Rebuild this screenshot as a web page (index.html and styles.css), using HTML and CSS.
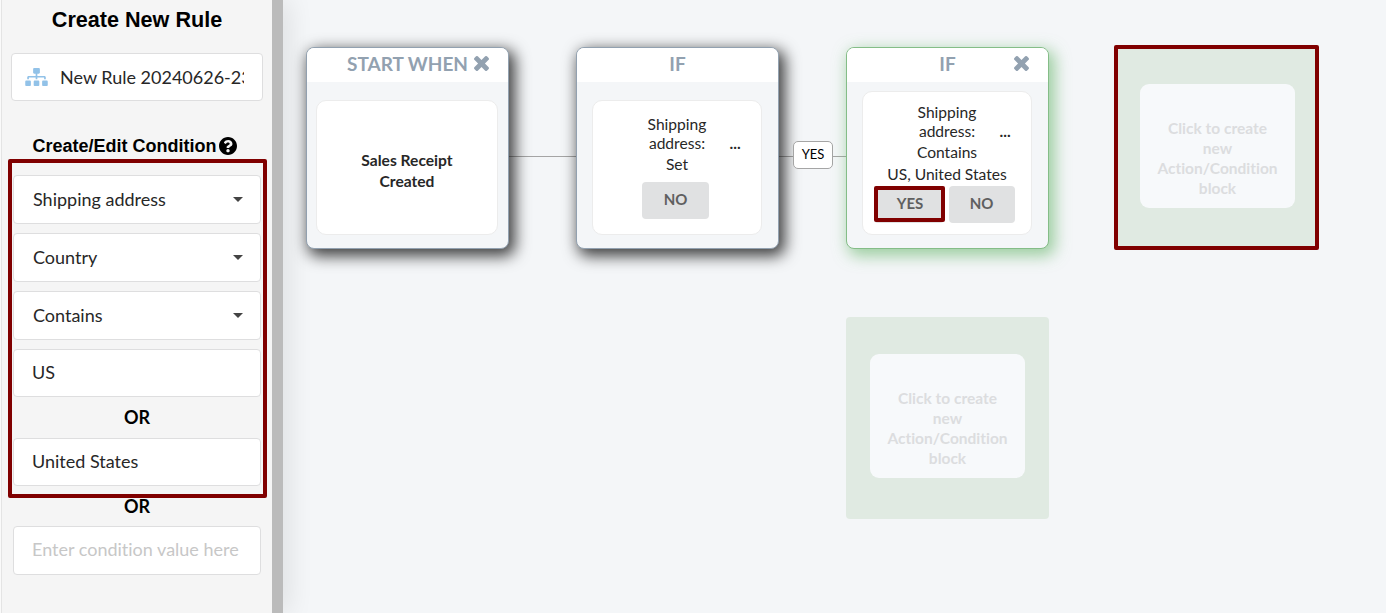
FILE: index.html
```html
<!DOCTYPE html>
<html lang="en">
<head>
  <meta charset="UTF-8" />
  <meta name="viewport" content="width=device-width, initial-scale=1.0"/>
  <title>Create New Rule</title>
  <link rel="stylesheet" href="styles.css">
</head>
<body>
  <svg class="hidden">
    <symbol id="icon-close" viewBox="302 302 1188 1188">
      <path d="M1490 1322q0 40-28 68l-136 136q-28 28-68 28t-68-28l-294-294-294 294q-28 28-68 28t-68-28l-136-136q-28-28-28-68t28-68l294-294-294-294q-28-28-28-68t28-68l136-136q28-28 68-28t68 28l294 294 294-294q28-28 68-28t68 28l136 136q28 28 28 68t-28 68l-294 294 294 294q28 28 28 68z" transform="translate(0 -64)"/>
    </symbol>
  </svg>

  <div class="app">
    <aside class="sidebar">
      <h1>Create New Rule</h1>
      <div class="name-box">
        <svg class="sitemap-icon" viewBox="0 0 640 512"><path d="M128 352H32c-17.67 0-32 14.33-32 32v96c0 17.67 14.33 32 32 32h96c17.67 0 32-14.33 32-32v-96c0-17.67-14.33-32-32-32zm-24-80h192v48h48v-48h192v48h48v-57.59c0-21.17-17.23-38.41-38.41-38.41H344v-64h40c17.67 0 32-14.33 32-32V32c0-17.67-14.33-32-32-32H256c-17.67 0-32 14.33-32 32v96c0 17.67 14.33 32 32 32h40v64H94.41C73.23 224 56 241.23 56 262.41V320h48v-48zm264 80h-96c-17.67 0-32 14.33-32 32v96c0 17.67 14.33 32 32 32h96c17.67 0 32-14.33 32-32v-96c0-17.67-14.33-32-32-32zm240 0h-96c-17.67 0-32 14.33-32 32v96c0 17.67 14.33 32 32 32h96c17.67 0 32-14.33 32-32v-96c0-17.67-14.33-32-32-32z"/></svg>
        <span class="name-text">New Rule 20240626-235</span>
      </div>

      <h2>Create/Edit Condition<svg class="help-icon" viewBox="8 8 496 496"><path d="M504 256c0 136.997-111.043 248-248 248S8 392.997 8 256C8 119.083 119.043 8 256 8s248 111.083 248 248zM262.655 90c-54.497 0-89.255 22.957-116.549 63.758-3.536 5.286-2.353 12.415 2.715 16.258l34.699 26.31c5.205 3.947 12.621 3.008 16.665-2.122 17.864-22.658 30.113-35.797 57.303-35.797 20.429 0 45.698 13.148 45.698 32.958 0 14.976-12.363 22.667-32.534 33.976C247.128 238.528 216 254.941 216 296v4c0 6.627 5.373 12 12 12h56c6.627 0 12-5.373 12-12v-1.333c0-28.462 83.186-29.647 83.186-106.667 0-58.002-60.165-102-116.531-102zM256 338c-25.365 0-46 20.635-46 46 0 25.364 20.635 46 46 46s46-20.636 46-46c0-25.364-20.635-46-46-46z"/></svg></h2>

      <div class="conditions">
        <div class="dropdown">Shipping address<i class="caret"></i></div>
        <div class="dropdown">Country<i class="caret"></i></div>
        <div class="dropdown">Contains<i class="caret"></i></div>
        <div class="field">US</div>
        <div class="or">OR</div>
        <div class="field">United States</div>
        <div class="or or-last">OR</div>
        <div class="field placeholder">Enter condition value here</div>
        <div class="highlight highlight-conditions"></div>
      </div>
    </aside>
    <div class="splitter"></div>

    <main class="canvas">
      <div class="edge edge-start"></div>
      <div class="edge edge-yes"></div>

      <div class="node node-start">
        <div class="node-header">START WHEN<svg class="close"><use href="#icon-close"/></svg></div>
        <div class="node-body wide">
          <strong>Sales Receipt<br>Created</strong>
        </div>
      </div>

      <div class="node node-if">
        <div class="node-header">IF</div>
        <div class="node-body">
          <div class="prop">Shipping<br>address:<span class="more">...</span></div>
          <div class="operator">Set</div>
          <div class="buttons"><span class="btn">NO</span></div>
        </div>
      </div>

      <span class="edge-label">YES</span>

      <div class="node node-active">
        <div class="node-header">IF<svg class="close"><use href="#icon-close"/></svg></div>
        <div class="node-body tall">
          <div class="prop">Shipping<br>address:<span class="more">...</span></div>
          <div class="operator">Contains</div>
          <div class="values">US, United States</div>
          <div class="buttons">
            <span class="btn">YES<i class="highlight highlight-btn"></i></span>
            <span class="btn">NO</span>
          </div>
        </div>
      </div>

      <div class="slot slot-yes">
        <div class="slot-text">Click to create new Action/Condition block</div>
        <div class="highlight highlight-slot"></div>
      </div>
      <div class="slot slot-no">
        <div class="slot-text">Click to create new Action/Condition block</div>
      </div>
    </main>
  </div>
</body>
</html>
```
FILE: styles.css
```css
:root {
  --bg: #f4f6f8;
  --border: #dededf;
  --text: #272727;
  --slate: #92a1b0;
  --red: #800000;
}

* {
  box-sizing: border-box;
}

body {
  font-family: Lato, sans-serif;
  font-variant-ligatures: none;
  color: var(--text);
  margin: 0;
}

.hidden {
  display: none;
}

.app {
  display: flex;
  height: 613px;
  overflow: hidden;
}

/* Sidebar */
.sidebar {
  position: relative;
  z-index: 2;
  width: 272px;
  flex: none;
  padding: 0 9px 0 10px;
  background: #f5f5f5;
  border-left: 1px solid #fafafa;
  box-shadow: inset 1px 0 #e4e4e4;
}

h1 {
  margin: 0;
  padding-top: 6px;
  height: 53px;
  font: bold 21.6px/27px "Liberation Sans", Arial, sans-serif;
  color: #000;
  text-align: center;
}

.name-box {
  display: flex;
  align-items: center;
  height: 48px;
  padding: 0 18px 0 13px;
  background: #fff;
  border: 1px solid var(--border);
  border-radius: 4px;
  font-size: 18px;
}

.sitemap-icon {
  width: 23px;
  height: 18px;
  flex: none;
  margin-right: 12px;
  fill: #92c2e8;
}

.name-text {
  overflow: hidden;
  white-space: nowrap;
  line-height: 24px;
  padding-bottom: 1px;
}

h2 {
  display: flex;
  align-items: center;
  margin: 33px 0 0 21.5px;
  height: 24px;
  font: bold 18px/24px "Liberation Sans", Arial, sans-serif;
  color: #000;
  white-space: nowrap;
}

.help-icon {
  width: 18px;
  height: 18px;
  flex: none;
  margin: 0 0 1px 2px;
}

.conditions {
  position: relative;
  margin: 17px 2px 0;
}

.dropdown,
.field {
  display: flex;
  align-items: center;
  height: 48px;
  padding: 0 18px 2px;
  background: #fff;
  border: 1px solid var(--border);
  border-radius: 4px;
  font-size: 18px;
}

.dropdown {
  justify-content: space-between;
  height: 49px;
  margin-bottom: 9px;
  padding: 0 17px 1px 19px;
}

.caret {
  border: 5px solid transparent;
  border-top-color: #444;
  border-bottom: 0;
}

.or {
  height: 41px;
  font-size: 18px;
  font-weight: bold;
  line-height: 41px;
  color: #000;
  text-align: center;
}

.or-last {
  height: 40px;
}

.placeholder {
  height: 49px;
  padding-bottom: 3px;
  color: #c7c7c7;
}

.splitter {
  width: 11px;
  flex: none;
  background: #bbb;
  box-shadow: 0 0 28px rgba(0, 0, 0, 0.2);
  z-index: 1;
}

/* Flow canvas */
.canvas {
  position: relative;
  flex: 1;
  background: var(--bg);
}

.node {
  position: absolute;
  top: 47px;
  width: 203px;
  height: 202px;
  background: var(--bg);
  border: 1px solid var(--slate);
  border-radius: 8px;
  box-shadow: 4px 5px 15px 2px rgba(0, 0, 0, 0.75);
}

.node-start { left: 23px; }
.node-if { left: 293px; }

.node-active {
  left: 563px;
  border-color: #84bd87;
  box-shadow: 4px 5px 15px 2px rgba(100, 180, 104, 0.6);
}

.node-header {
  position: relative;
  height: 34px;
  background: #fff;
  border-radius: 7px 7px 0 0;
  color: var(--slate);
  font-size: 19px;
  font-weight: bold;
  line-height: 31px;
  text-align: center;
}

.close {
  position: absolute;
  top: 8px;
  right: 19.5px;
  width: 15px;
  height: 15px;
  fill: var(--slate);
}

.node-body {
  display: flex;
  flex-direction: column;
  align-items: center;
  width: 170px;
  height: 135px;
  margin: 18px 0 0 15px;
  padding-top: 14px;
  background: #fff;
  border: 1px solid #ececec;
  border-radius: 10px;
  font-size: 15.6px;
  line-height: 19px;
  text-align: center;
}

.node-body.wide {
  width: 182px;
  margin-left: 9px;
  padding-top: 49px;
  line-height: 21px;
}

.node-body.tall {
  height: 144px;
  margin-top: 9px;
  padding-top: 11px;
}

.prop {
  position: relative;
}

.more {
  position: absolute;
  left: 82px;
  bottom: 0;
  font-weight: bold;
}

.operator {
  line-height: 22px;
}

.values {
  line-height: 22px;
}

.buttons {
  display: flex;
  gap: 5px;
  margin: 7px 3px 0 0;
}

.tall .buttons {
  margin: 1px 6px 0 0;
}

.btn {
  position: relative;
  width: 67px;
  height: 37px;
  background: #e0e1e2;
  border-radius: 4px;
  color: #5f5f60;
  font-size: 15px;
  font-weight: bold;
  line-height: 35px;
}

.tall .btn {
  width: 66px;
}

.tall .btn:first-child {
  width: 70px;
  padding-left: 3px;
}

.edge {
  position: absolute;
  top: 156px;
  height: 1px;
  background: #a5a5a5;
}

.edge-start {
  left: 226px;
  width: 67px;
}

.edge-yes {
  left: 496px;
  width: 67px;
}

.edge-label {
  position: absolute;
  left: 510px;
  top: 141px;
  width: 40px;
  height: 28px;
  background: #fff;
  border: 1px solid #a5a5a5;
  border-radius: 5px;
  color: #000;
  font-size: 13px;
  line-height: 25px;
  text-align: center;
}

.slot {
  position: absolute;
  width: 203px;
  height: 202px;
  padding: 37px 24px;
  background: #e0eae2;
  border-radius: 4px;
}

.slot-yes {
  left: 833px;
  top: 47px;
}

.slot-no {
  left: 563px;
  top: 317px;
}

.slot-text {
  height: 124px;
  padding: 34px 14px 0;
  background: #f7f9fb;
  border-radius: 9px;
  color: #dcdddf;
  font-size: 15.5px;
  font-weight: bold;
  line-height: 20px;
  text-align: center;
}

.highlight {
  position: absolute;
  border: 4px solid var(--red);
  border-radius: 2px;
}

.highlight-conditions {
  left: -5px;
  top: -16px;
  width: 259px;
  height: 339px;
}

.highlight-btn {
  left: 0;
  top: 0;
  width: 71px;
  height: 36px;
}

.highlight-slot {
  left: -2px;
  top: -2px;
  width: 205px;
  height: 205px;
}
```
